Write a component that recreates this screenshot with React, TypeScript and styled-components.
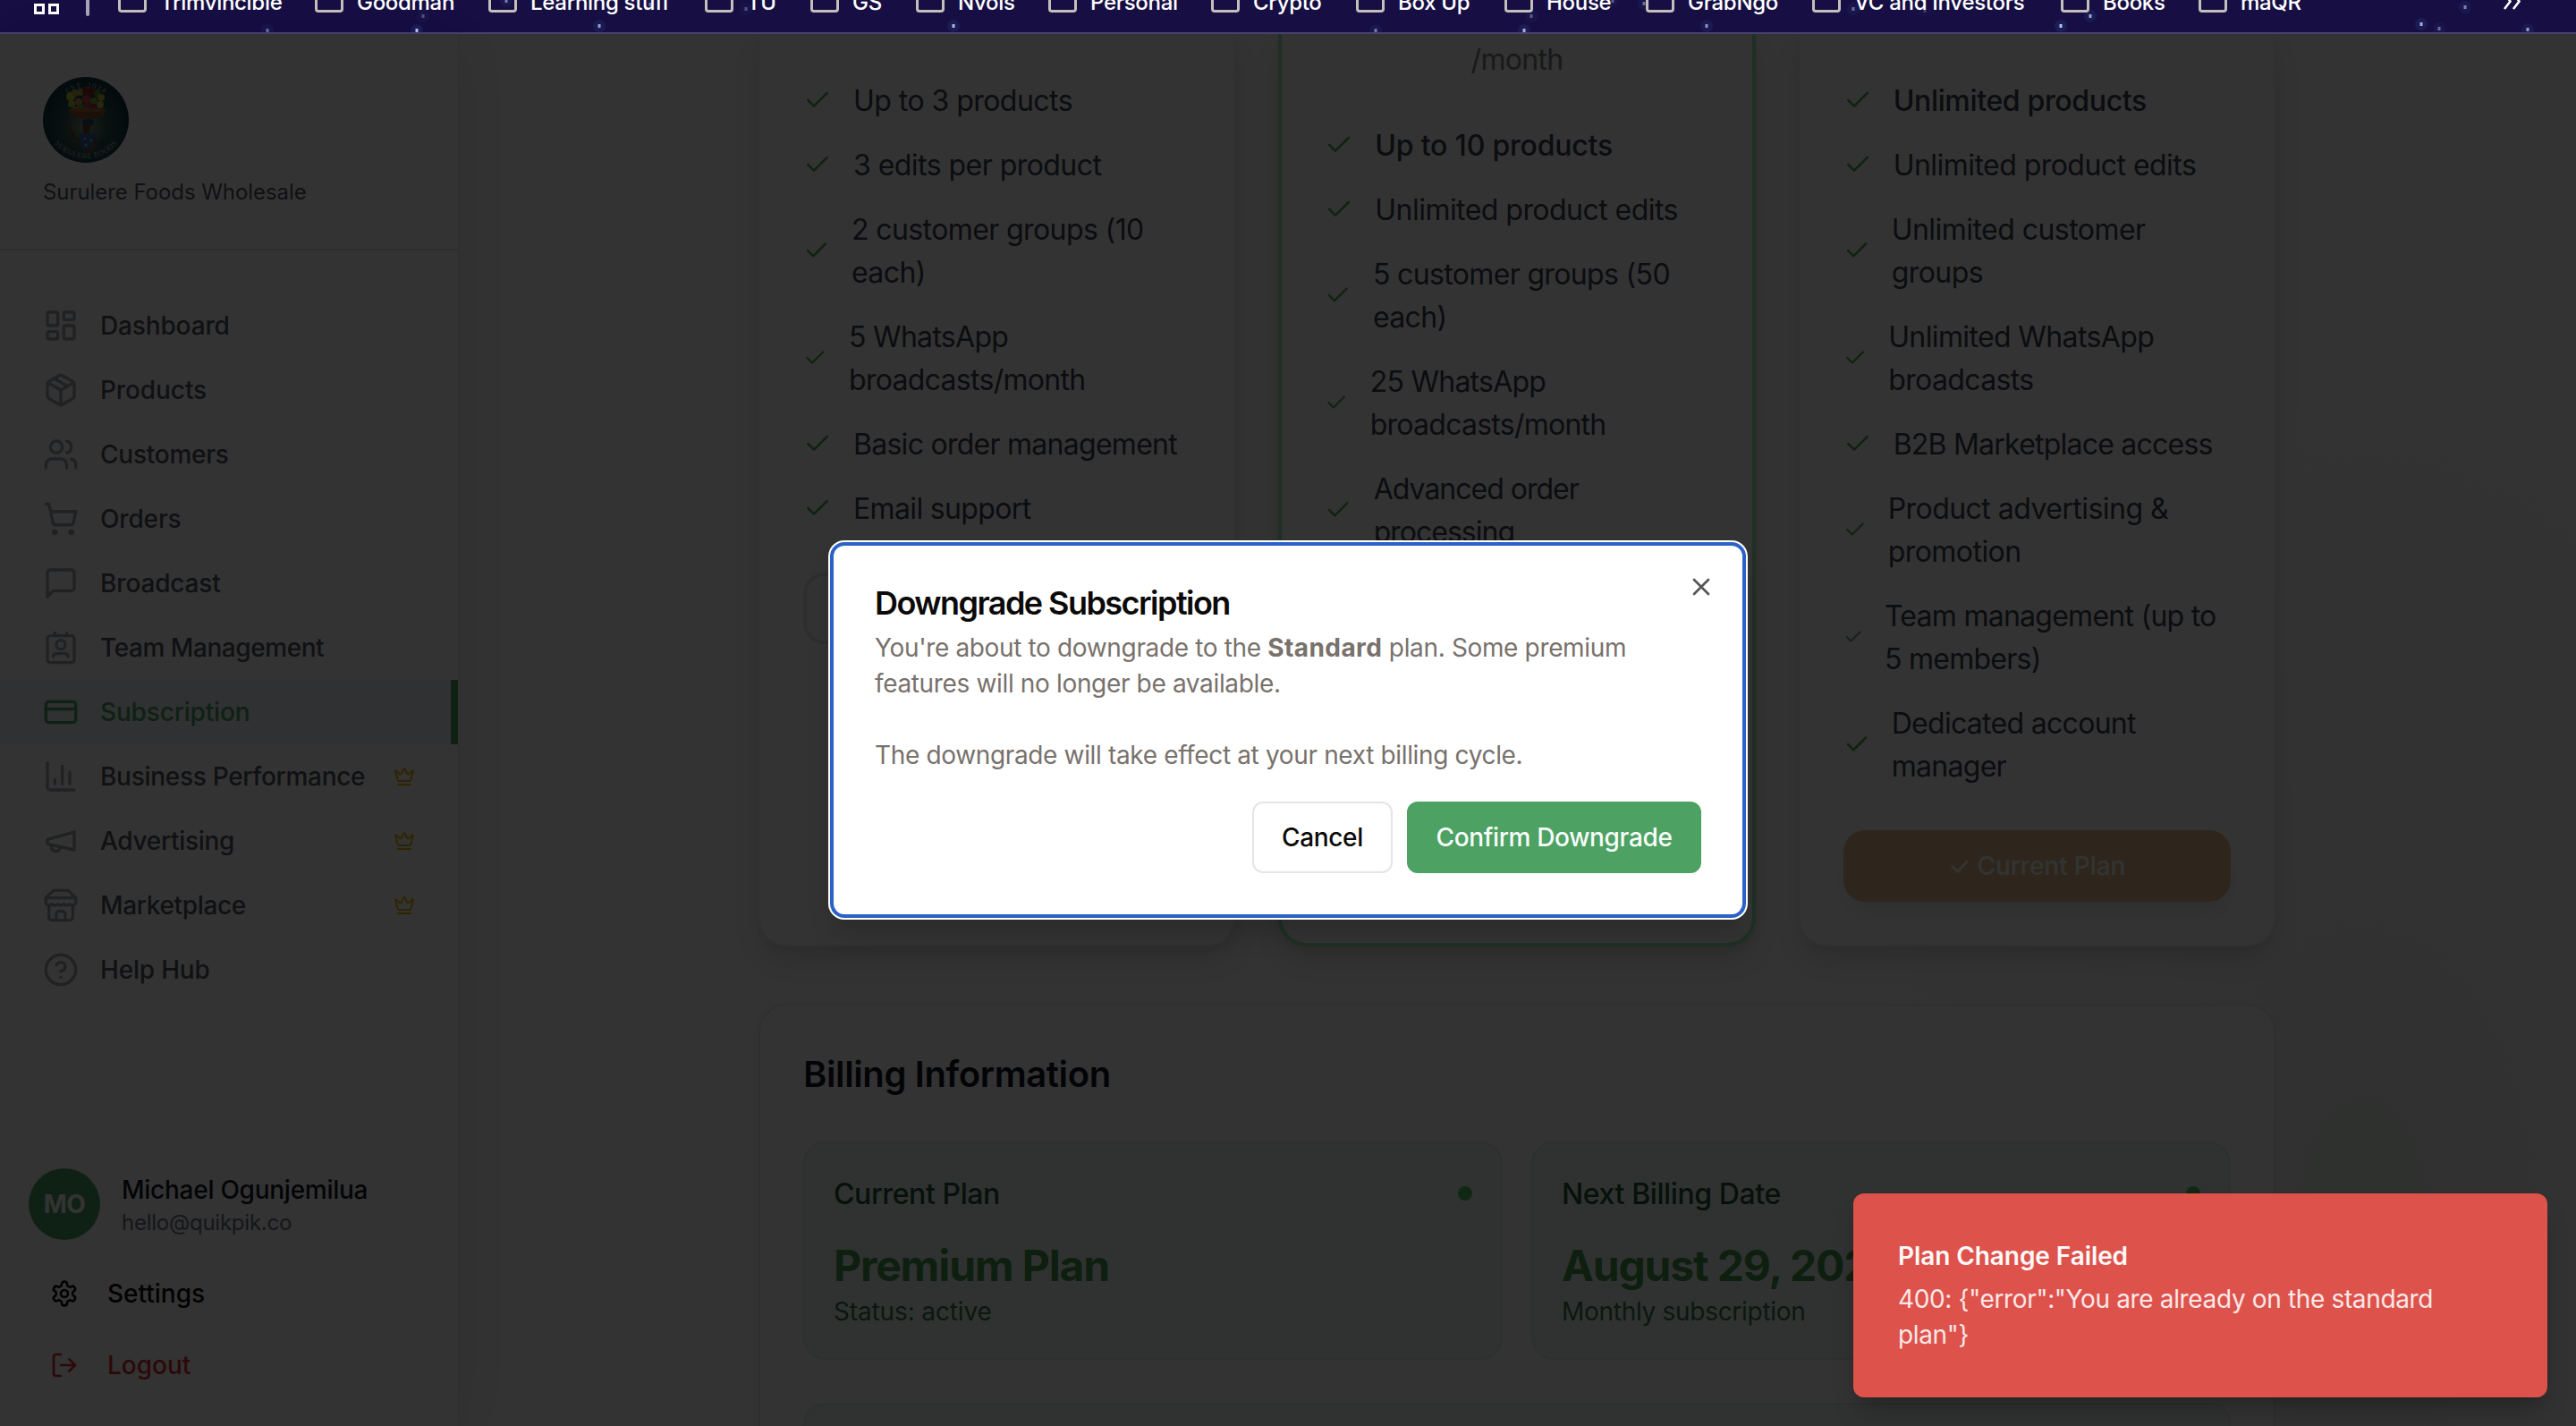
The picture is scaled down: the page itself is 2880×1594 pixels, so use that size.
import React from "react";
import styled, { createGlobalStyle, css } from "styled-components";

const Global = createGlobalStyle`
  *, *::before, *::after { box-sizing: border-box; }
  body { margin: 0; overflow: hidden; background: #ffffff; }
  button { font: inherit; margin: 0; padding: 0; background: none; border: 0; cursor: pointer; }
  ul { list-style: none; margin: 0; padding: 0; }
  h2, h3, p { margin: 0; }
`;

/* Drops a text one pixel inside its line without changing the space it takes. */
const lowered = css`
  display: block;
  padding-top: 1px;
  margin-bottom: -1px;
`;

/* ---------- icons ---------- */

type IconProps = { size: number; width?: number; stroke?: number; children: React.ReactNode };

const Svg = styled.svg`
  display: block;
  flex: none;
  fill: none;
  stroke: currentColor;
  stroke-linecap: round;
  stroke-linejoin: round;
`;

const Icon = ({ size, width = size, stroke = 2, children }: IconProps) => (
  <Svg width={width} height={size} viewBox="0 0 24 24" strokeWidth={stroke}>
    {children}
  </Svg>
);

const glyphs = {
  dashboard: (
    <>
      <rect width="7" height="9" x="3" y="3" rx="1" />
      <rect width="7" height="5" x="14" y="3" rx="1" />
      <rect width="7" height="9" x="14" y="12" rx="1" />
      <rect width="7" height="5" x="3" y="16" rx="1" />
    </>
  ),
  box: (
    <>
      <path d="m7.5 4.27 9 5.15" />
      <path d="M21 8a2 2 0 0 0-1-1.73l-7-4a2 2 0 0 0-2 0l-7 4A2 2 0 0 0 3 8v8a2 2 0 0 0 1 1.73l7 4a2 2 0 0 0 2 0l7-4A2 2 0 0 0 21 16Z" />
      <path d="m3.3 7 8.7 5 8.7-5" />
      <path d="M12 22V12" />
    </>
  ),
  users: (
    <>
      <path d="M16 21v-2a4 4 0 0 0-4-4H6a4 4 0 0 0-4 4v2" />
      <circle cx="9" cy="7" r="4" />
      <path d="M22 21v-2a4 4 0 0 0-3-3.87" />
      <path d="M16 3.13a4 4 0 0 1 0 7.75" />
    </>
  ),
  cart: (
    <>
      <circle cx="8" cy="21" r="1" />
      <circle cx="19" cy="21" r="1" />
      <path d="M2.05 2.05h2l2.66 12.42a2 2 0 0 0 2 1.58h9.78a2 2 0 0 0 1.95-1.57l1.65-7.43H5.12" />
    </>
  ),
  message: <path d="M21 15a2 2 0 0 1-2 2H7l-4 4V5a2 2 0 0 1 2-2h14a2 2 0 0 1 2 2z" />,
  contact: (
    <>
      <path d="M17 18a2 2 0 0 0-2-2H9a2 2 0 0 0-2 2" />
      <rect width="18" height="18" x="3" y="4" rx="2" />
      <circle cx="12" cy="10" r="3" />
      <path d="M8 2v2M16 2v2" />
    </>
  ),
  card: (
    <>
      <rect width="20" height="14" x="2" y="5" rx="2" />
      <path d="M2 10h20" />
    </>
  ),
  chart: (
    <>
      <path d="M3 3v16a2 2 0 0 0 2 2h16" />
      <path d="M18 17V9M13 17V5M8 17v-3" />
    </>
  ),
  megaphone: (
    <>
      <path d="m3 11 18-5v12L3 14v-3z" />
      <path d="M11.6 16.8a3 3 0 1 1-5.8-1.6" />
    </>
  ),
  store: (
    <>
      <path d="m2 7 4.41-4.41A2 2 0 0 1 7.83 2h8.34a2 2 0 0 1 1.42.59L22 7" />
      <path d="M4 12v8a2 2 0 0 0 2 2h12a2 2 0 0 0 2-2v-8" />
      <path d="M15 22v-4a2 2 0 0 0-2-2h-2a2 2 0 0 0-2 2v4" />
      <path d="M2 7h20" />
      <path d="M22 7v3a2 2 0 0 1-2 2a2.7 2.7 0 0 1-1.59-.63.7.7 0 0 0-.82 0A2.7 2.7 0 0 1 16 12a2.7 2.7 0 0 1-1.59-.63.7.7 0 0 0-.82 0A2.7 2.7 0 0 1 12 12a2.7 2.7 0 0 1-1.59-.63.7.7 0 0 0-.82 0A2.7 2.7 0 0 1 8 12a2.7 2.7 0 0 1-1.59-.63.7.7 0 0 0-.82 0A2.7 2.7 0 0 1 4 12a2 2 0 0 1-2-2V7" />
    </>
  ),
  help: (
    <>
      <circle cx="12" cy="12" r="10" />
      <path d="M9.09 9a3 3 0 0 1 5.83 1c0 2-3 3-3 3" />
      <path d="M12 17h.01" />
    </>
  ),
  crown: (
    <>
      <path d="M11.562 3.266a.5.5 0 0 1 .876 0L15.39 8.87a1 1 0 0 0 1.516.294L21.183 5.5a.5.5 0 0 1 .798.519l-2.834 10.246a1 1 0 0 1-.956.734H5.81a1 1 0 0 1-.957-.734L2.02 6.02a.5.5 0 0 1 .798-.519l4.276 3.664a1 1 0 0 0 1.516-.294z" />
      <path d="M5 21h14" />
    </>
  ),
  settings: (
    <>
      <path d="M12.22 2h-.44a2 2 0 0 0-2 2v.18a2 2 0 0 1-1 1.73l-.43.25a2 2 0 0 1-2 0l-.15-.08a2 2 0 0 0-2.73.73l-.22.38a2 2 0 0 0 .73 2.73l.15.1a2 2 0 0 1 1 1.72v.51a2 2 0 0 1-1 1.74l-.15.09a2 2 0 0 0-.73 2.73l.22.38a2 2 0 0 0 2.73.73l.15-.08a2 2 0 0 1 2 0l.43.25a2 2 0 0 1 1 1.73V20a2 2 0 0 0 2 2h.44a2 2 0 0 0 2-2v-.18a2 2 0 0 1 1-1.73l.43-.25a2 2 0 0 1 2 0l.15.08a2 2 0 0 0 2.73-.73l.22-.39a2 2 0 0 0-.73-2.73l-.15-.08a2 2 0 0 1-1-1.74v-.5a2 2 0 0 1 1-1.74l.15-.09a2 2 0 0 0 .73-2.73l-.22-.38a2 2 0 0 0-2.73-.73l-.15.08a2 2 0 0 1-2 0l-.43-.25a2 2 0 0 1-1-1.73V4a2 2 0 0 0-2-2z" />
      <circle cx="12" cy="12" r="3" />
    </>
  ),
  logout: (
    <>
      <path d="M9 21H5a2 2 0 0 1-2-2V5a2 2 0 0 1 2-2h4" />
      <path d="m16 17 5-5-5-5" />
      <path d="M21 12H9" />
    </>
  ),
  check: <path d="M20 6 9 17l-5-5" />,
  close: <path d="M18 6 6 18M6 6l12 12" />,
};

/* ---------- shell ---------- */

const Screen = styled.div`
  position: relative;
  width: 2880px;
  height: 1594px;
  overflow: hidden;
  display: flex;
  flex-direction: column;
  font-family: Inter, "Liberation Sans", sans-serif;
  font-size: 28px;
  line-height: 40px;
`;

const BookmarkBar = styled.header`
  position: relative;
  flex: none;
  height: 38px;
  overflow: hidden;
  background: #170f43;
  border-bottom: 2px solid #4a4170;
`;

const StarField = styled.svg`
  position: absolute;
  inset: 0;
  width: 2880px;
  height: 36px;
`;

const BookmarkRow = styled.div`
  position: relative;
  height: 44px;
  margin-top: -21px;
  padding-left: 38px;
  display: flex;
  align-items: center;
  color: #ffffff;
`;

const Separator = styled.div`
  width: 4px;
  height: 34px;
  margin: 0 32px 0 30px;
  border-radius: 2px;
  background: #a8a4b8;
`;

const Bookmark = styled.div<{ $width: number }>`
  flex: none;
  width: ${(p) => p.$width}px;
  display: flex;
  align-items: center;
  gap: 15px;
  font-size: 24px;
  font-weight: 500;
  line-height: 30px;
  letter-spacing: -0.3px;
  white-space: nowrap;
`;

const BookmarkLabel = styled.span`
  display: block;
  padding-top: 1.5px;
  margin-bottom: -1.5px;
`;

const Folder = styled.span`
  width: 32px;
  height: 26px;
  border: 3px solid #c3bfbb;
  border-radius: 4px;
`;

const MoreButton = styled.button`
  margin-left: 187px;
  color: #ffffff;
`;

const Workspace = styled.div`
  flex: 1;
  min-height: 0;
  display: grid;
  grid-template-columns: 512px 1fr;
  grid-template-rows: minmax(0, 1fr);
  background: #fcfcfc;
`;

/* ---------- sidebar ---------- */

const Sidebar = styled.aside`
  position: relative;
  z-index: 1;
  display: flex;
  flex-direction: column;
  background: #ffffff;
  box-shadow: 0 20px 50px rgba(0, 0, 0, 0.05), 8px 0 64px rgba(0, 0, 0, 0.03), 0 0 4px rgba(0, 0, 0, 0.06);
`;

const StoreHeader = styled.div`
  flex: none;
  height: 242px;
  padding: 48px;
  display: flex;
  flex-direction: column;
  align-items: flex-start;
  gap: 16px;
  border-bottom: 2px solid #e5e7eb;
`;

const StoreName = styled.div`
  ${lowered}
  font-size: 24px;
  line-height: 32px;
  letter-spacing: -0.06px;
  color: #4b5563;
`;

const Nav = styled.nav`
  flex: 1;
  padding-top: 48px;
`;

const NavItem = styled.a<{ $active?: boolean; $tracking: number }>`
  height: 72px;
  padding: 0 48px;
  display: flex;
  align-items: center;
  gap: 24px;
  color: #4f5561;
  font-weight: 500;
  letter-spacing: ${(p) => p.$tracking}px;
  white-space: nowrap;
  > svg:first-child { color: #9ca3af; }
  ${(p) =>
    p.$active &&
    css`
      background: #f0f4f8;
      color: #4ba564;
      border-right: 8px solid #4ba564;
      > svg:first-child { color: #4ba564; }
    `}
`;

const PremiumMark = styled.span`
  margin-left: auto;
  color: #eab308;
`;

const Account = styled.div`
  flex: none;
  padding: 0 32px 24px;
  display: flex;
  flex-direction: column;
`;

const Profile = styled.div`
  height: 80px;
  margin-bottom: 24px;
  display: flex;
  align-items: center;
  gap: 24px;
`;

const Avatar = styled.div`
  width: 80px;
  height: 80px;
  border-radius: 50%;
  display: flex;
  align-items: center;
  justify-content: center;
  background: #4ba564;
  color: #ffffff;
  font-weight: 700;
  letter-spacing: -0.6px;
`;

const ProfileName = styled.div`
  font-weight: 500;
  letter-spacing: -0.26px;
  color: #111827;
`;

const ProfileEmail = styled.div`
  ${lowered}
  font-size: 24px;
  line-height: 32px;
  letter-spacing: -0.24px;
  color: #6b7280;
`;

const AccountAction = styled.button<{ $danger?: boolean }>`
  height: 72px;
  margin-bottom: 8px;
  padding-left: 24px;
  display: flex;
  align-items: center;
  gap: 32px;
  font-weight: 500;
  color: ${(p) => (p.$danger ? "#dc2f2a" : "#0a0a0a")};
`;

/* ---------- plans ---------- */

const Main = styled.main`
  min-width: 0;
  padding: 0 336px;
  display: flex;
  flex-direction: column;
  gap: 64px;
  background:
    radial-gradient(ellipse 560px 900px at 2130px 1300px, rgba(226, 238, 226, 0.7), rgba(240, 246, 240, 0.4) 55%, rgba(252, 252, 252, 0)),
    #fcfcfc;
`;

const PlanGrid = styled.section`
  flex: none;
  height: 1020px;
  display: grid;
  grid-template-columns: repeat(3, 1fr);
  gap: 48px;
`;

const PlanCard = styled.article<{ $featured?: boolean }>`
  display: flex;
  flex-direction: column;
  padding: ${(p) => (p.$featured ? "0 48px" : "50px 48px 48px")};
  border: solid ${(p) => (p.$featured ? "#9be8b0" : "#f1f3f5")};
  border-width: ${(p) => (p.$featured ? "0 4px 4px" : "0 2px 2px")};
  border-radius: 0 0 32px 32px;
  background: #ffffff;
  box-shadow: 0 16px 32px -4px rgba(0, 0, 0, 0.13), 0 4px 10px rgba(0, 0, 0, 0.05);
`;

const Period = styled.div`
  margin: 5px 0 47px;
  text-align: center;
  font-size: 32px;
  line-height: 48px;
  letter-spacing: -0.7px;
  color: #7b7f87;
`;

const FeatureList = styled.ul`
  display: flex;
  flex-direction: column;
  gap: 24px;
  margin-bottom: 48px;
`;

const Feature = styled.li<{ $strong?: boolean; $tracking?: number }>`
  display: flex;
  align-items: center;
  gap: 24px;
  font-size: 32px;
  line-height: 48px;
  font-weight: ${(p) => (p.$strong ? 500 : 400)};
  letter-spacing: ${(p) => p.$tracking ?? -0.54}px;
  color: #374151;
  white-space: pre;
  svg { color: #4cae50; }
`;

const FeatureText = styled.span`
  ${lowered}
`;

const PlanButton = styled.button`
  height: 80px;
  flex: none;
  border: 4px solid #e5e7eb;
  border-radius: 24px;
`;

const CurrentPlanButton = styled.button`
  height: 80px;
  flex: none;
  border-radius: 24px;
  background: #e3be8a;
  color: #ffffff;
  font-weight: 500;
  letter-spacing: -0.1px;
  box-shadow: 0 16px 26px -8px rgba(0, 0, 0, 0.12);
`;

/* ---------- billing ---------- */

const Billing = styled.section`
  height: 700px;
  flex: none;
  padding: 48px;
  border: 2px solid #eaecef;
  border-radius: 32px;
  background: #ffffff;
  box-shadow: 0 2px 6px rgba(0, 0, 0, 0.05);
`;

const BillingTitle = styled.h2`
  padding-top: 1px;
  margin-bottom: 47px;
  font-size: 40px;
  line-height: 56px;
  font-weight: 600;
  letter-spacing: -0.38px;
  color: #111827;
`;

const BillingGrid = styled.div`
  display: grid;
  grid-template-columns: 1fr 1fr;
  gap: 48px 32px;
`;

const Panel = styled.div<{ $wide?: boolean }>`
  height: 244px;
  padding: 32px;
  border: 2px solid #e0f0e9;
  border-radius: 24px;
  background: #f0f8f4;
  ${(p) => p.$wide && "grid-column: 1 / -1;"}
`;

const PanelHead = styled.div`
  height: 48px;
  margin-bottom: 24px;
  display: flex;
  align-items: center;
  justify-content: space-between;
`;

const PanelLabel = styled.h3`
  padding-top: 1px;
  margin-bottom: -1px;
  font-size: 32px;
  line-height: 48px;
  font-weight: 500;
  letter-spacing: -0.4px;
  color: #27553a;
`;

const Dot = styled.span`
  width: 16px;
  height: 16px;
  border-radius: 50%;
  background: #4cc15f;
`;

const PanelValue = styled.p`
  padding-top: 1px;
  margin-bottom: -1px;
  font-size: 48px;
  line-height: 64px;
  font-weight: 700;
  letter-spacing: -1.15px;
  color: #459b4f;
`;

const PanelNote = styled.p<{ $tracking: number }>`
  letter-spacing: ${(p) => p.$tracking}px;
  color: #35794c;
`;

/* ---------- layers above the page ---------- */

const Scrim = styled.div`
  position: absolute;
  inset: 38px 0 0;
  z-index: 2;
  background: rgba(0, 0, 0, 0.8);
`;

const Dialog = styled.div`
  position: absolute;
  left: 928px;
  top: 606px;
  z-index: 3;
  width: 1024px;
  height: 420px;
  padding: 50px;
  display: flex;
  flex-direction: column;
  border-radius: 16px;
  background: #ffffff;
  box-shadow: inset 0 0 0 4px #2a62c8, 0 0 0 2px #ffffff, 0 20px 30px -6px rgba(0, 0, 0, 0.18);
`;

const DialogClose = styled.button`
  position: absolute;
  top: 34px;
  right: 34px;
  color: #555555;
`;

const DialogTitle = styled.h2`
  margin-bottom: 12px;
  font-size: 36px;
  line-height: 36px;
  font-weight: 600;
  letter-spacing: -1.55px;
  color: #0c0a09;
`;

const DialogText = styled.p`
  letter-spacing: -0.35px;
  color: #78716c;
  strong { letter-spacing: 0.42px; }
`;

const DialogActions = styled.div`
  margin-top: auto;
  display: flex;
  justify-content: flex-end;
  gap: 16px;
`;

const DialogButton = styled.button<{ $primary?: boolean; $width: number }>`
  width: ${(p) => p.$width}px;
  height: 80px;
  border-radius: 12px;
  border: 2px solid ${(p) => (p.$primary ? "#4ca163" : "#e6e5e4")};
  background: ${(p) => (p.$primary ? "#4ca163" : "#ffffff")};
  color: ${(p) => (p.$primary ? "#f8fdf9" : "#0c0a09")};
  font-weight: 500;
  letter-spacing: -0.35px;
`;

const Toast = styled.div`
  position: absolute;
  right: 32px;
  bottom: 32px;
  z-index: 4;
  width: 776px;
  height: 228px;
  padding: 50px;
  display: flex;
  flex-direction: column;
  gap: 8px;
  border-radius: 12px;
  background: #de524c;
  color: #fdf9f9;
  box-shadow: 0 20px 30px -6px rgba(0, 0, 0, 0.2), 0 8px 12px -8px rgba(0, 0, 0, 0.2);
`;

const ToastTitle = styled.div`
  font-weight: 600;
  letter-spacing: -0.08px;
`;

const ToastText = styled.div`
  letter-spacing: -0.35px;
  opacity: 0.9;
  white-space: pre;
`;

/* ---------- data ---------- */

const bookmarks: [string, number][] = [
  ["Trimvincible", 220],
  ["Goodman", 194],
  ["Learning stuff", 242],
  ["TU", 118],
  ["GS", 118],
  ["Nvols", 148],
  ["Personal", 182],
  ["Crypto", 162],
  ["Box Up", 166],
  ["House", 158],
  ["GrabNgo", 186],
  ["VC and Investors", 278],
  ["Books", 154],
  ["maQR", 154],
];

const stars: [number, number, number][] = [
  [299, 34, 0.5], [473, 18, 0.35], [466, 34, 0.95], [670, 29, 0.75], [834, 10, 0.35], [566, 1, 0.6],
  [727, 5, 0.5], [1066, 29, 0.9], [1538, 34, 0.55], [1704, 34, 0.85], [1712, 18, 0.4], [1803, 1, 0.4],
  [1838, 4, 0.5], [1908, 29, 0.7], [2072, 10, 0.5], [2152, 12, 0.25], [2304, 29, 0.95], [2337, 18, 0.8],
  [2756, 8, 0.6], [2707, 27, 0.85], [2727, 32, 0.5], [2826, 33, 0.75],
];

type NavEntry = { label: string; icon: keyof typeof glyphs; tracking: number; active?: boolean; premium?: boolean };

const navEntries: NavEntry[] = [
  { label: "Dashboard", icon: "dashboard", tracking: -0.15 },
  { label: "Products", icon: "box", tracking: -0.1 },
  { label: "Customers", icon: "users", tracking: -0.25 },
  { label: "Orders", icon: "cart", tracking: -0.15 },
  { label: "Broadcast", icon: "message", tracking: -0.15 },
  { label: "Team Management", icon: "contact", tracking: -0.44 },
  { label: "Subscription", icon: "card", tracking: -0.17, active: true },
  { label: "Business Performance", icon: "chart", tracking: -0.29, premium: true },
  { label: "Advertising", icon: "megaphone", tracking: -0.3, premium: true },
  { label: "Marketplace", icon: "store", tracking: -0.33, premium: true },
  { label: "Help Hub", icon: "help", tracking: -0.2 },
];

type FeatureEntry = { text: string; check?: number; strong?: boolean; tracking?: number };

const freeFeatures: FeatureEntry[] = [
  { text: "Up to 3 products" },
  { text: "3 edits per product" },
  { text: "2 customer groups (10\neach)", check: 30, tracking: -0.6 },
  { text: "5 WhatsApp\nbroadcasts/month", check: 27, tracking: -0.7 },
  { text: "Basic order management", tracking: -0.73 },
  { text: "Email support", tracking: -0.65 },
];

const standardFeatures: FeatureEntry[] = [
  { text: "Up to 10 products", strong: true, tracking: -0.2 },
  { text: "Unlimited product edits" },
  { text: "5 customer groups (50\neach)", check: 29.6, tracking: -0.65 },
  { text: "25 WhatsApp\nbroadcasts/month", check: 26.4, tracking: -0.75 },
  { text: "Advanced order\nprocessing", check: 30.4, tracking: -1 },
];

const premiumFeatures: FeatureEntry[] = [
  { text: "Unlimited products", strong: true, tracking: -0.34 },
  { text: "Unlimited product edits" },
  { text: "Unlimited customer\ngroups", check: 30 },
  { text: "Unlimited WhatsApp\nbroadcasts", check: 26.5, tracking: -0.62 },
  { text: "B2B Marketplace access", tracking: -0.77 },
  { text: "Product advertising &\npromotion", check: 26 },
  { text: "Team management (up to\n5 members)", check: 22.3, tracking: -0.74 },
  { text: "Dedicated account\nmanager", check: 30, tracking: -0.7 },
];

/* ---------- pieces ---------- */

const Features = ({ items }: { items: FeatureEntry[] }) => (
  <FeatureList>
    {items.map((f) => (
      <Feature key={f.text} $strong={f.strong} $tracking={f.tracking}>
        <Icon size={32} width={f.check ?? 32}>{glyphs.check}</Icon>
        <FeatureText>{f.text}</FeatureText>
      </Feature>
    ))}
  </FeatureList>
);

const fruits: [number, number, number, string][] = [
  [31, 22, 5, "#c9c93a"], [36, 18, 4, "#b9a43a"], [42, 17, 4, "#9fb23d"], [49, 16, 5, "#a52b2b"], [56, 17, 4, "#8c2a30"],
  [61, 19, 4, "#4f8a35"], [65, 23, 4, "#c9b93a"], [32, 30, 4, "#a9bd3c"], [40, 28, 4, "#d98a3a"], [49, 25, 5, "#c04a55"],
  [57, 27, 4, "#7fa43a"], [64, 31, 4, "#b8c04a"], [42, 34, 4, "#6f9d3a"], [50, 33, 4, "#b8434a"], [57, 34, 4, "#9b3550"],
  [36, 36, 3, "#c9a03a"],
];

const StoreLogo = () => (
  <svg width="96" height="96" viewBox="0 0 96 96">
    <defs>
      <radialGradient id="logoGlow" cx="50%" cy="58%" r="50%">
        <stop offset="0" stopColor="#8b9a80" />
        <stop offset="0.5" stopColor="#2c5352" />
        <stop offset="1" stopColor="#10393f" />
      </radialGradient>
      <path id="logoTop" d="M12 48a36 36 0 0 1 72 0" />
      <path id="logoBottom" d="M3 46a45 45 0 0 0 90 0" />
    </defs>
    <circle cx="48" cy="48" r="48" fill="url(#logoGlow)" />
    {fruits.map(([x, y, r, fill]) => (
      <circle key={`${x}-${y}`} cx={x} cy={y} r={r} fill={fill} />
    ))}
    <path d="M29 37h41c0 6-6 9-13 9H43c-8 0-13-3-14-9z" fill="#8a4f2a" />
    <ellipse cx="49.500" cy="37" rx="21" ry="2" fill="#a8683a" />
    <path d="M44 50c0-4 12-5 13 0 1 4-3 6-5 5-3 1-8-1-8-5z" fill="#24507f" />
    <path d="M45 53c1-2 8-1 8 1 0 5-1 6-2 9h-5c-1-3-2-6-1-10z" fill="#6b3c22" />
    <path d="m42 72-9-6-3-8" fill="none" stroke="#6b3c22" strokeWidth="3" strokeLinecap="round" />
    <path d="m29 57 6-4" stroke="#8a4a3a" strokeWidth="2" strokeLinecap="round" />
    <path d="M41 65c4-3 14-3 18 1 2 5 1 9-2 13-4 3-10 3-14 0-1-5-3-9-2-14z" fill="#2a67a5" />
    <path d="M58 70c3 5 1 9-7 14l-4-1" fill="none" stroke="#7a4428" strokeWidth="3" strokeLinecap="round" />
    <circle cx="47" cy="69" r="1.600" fill="#d99a3a" />
    <circle cx="54" cy="71" r="1.600" fill="#d99a3a" />
    <circle cx="48" cy="76" r="1.600" fill="#d99a3a" />
    <text fontFamily="Liberation Serif, serif" fontSize="8.500" letterSpacing="1" fill="#a9b8ac">
      <textPath href="#logoTop" startOffset="50%" textAnchor="middle">EST. 2024</textPath>
    </text>
    <text fontFamily="Liberation Serif, serif" fontSize="8.500" letterSpacing="0.500" fill="#a9b8ac">
      <textPath href="#logoBottom" startOffset="50%" textAnchor="middle">SURULERE FOODS</textPath>
    </text>
  </svg>
);

export default function App() {
  return (
    <Screen>
      <Global />
      <BookmarkBar>
        <StarField viewBox="0 0 2880 36">
          {stars.map(([x, y, o]) => (
            <g key={`${x}-${y}`} opacity={o}>
              <circle cx={x} cy={y} r="7" fill="#2c4a9a" opacity="0.25" />
              <rect x={x - 1.5} y={y - 2} width="3" height="4" fill="#c9c8f2" />
            </g>
          ))}
        </StarField>
        <BookmarkRow>
          <svg width="28" height="30" viewBox="0 0 28 30" fill="none" stroke="#ffffff" strokeWidth="3">
            <rect x="1.500" y="3.500" width="9" height="9" />
            <rect x="17.500" y="3.500" width="9" height="9" />
            <rect x="1.500" y="19.500" width="9" height="9" />
            <rect x="17.500" y="19.500" width="9" height="9" />
          </svg>
          <Separator />
          {bookmarks.map(([label, width]) => (
            <Bookmark key={label} $width={width}>
              <Folder />
              <BookmarkLabel>{label}</BookmarkLabel>
            </Bookmark>
          ))}
          <MoreButton>
            <svg width="20" height="20" viewBox="0 0 20 20" fill="none" stroke="currentColor" strokeWidth="2.600">
              <path d="m1 2 6.500 8.500-6.500 8.500M11 2l6.500 8.500-6.500 8.500" />
            </svg>
          </MoreButton>
        </BookmarkRow>
      </BookmarkBar>

      <Workspace>
        <Sidebar>
          <StoreHeader>
            <StoreLogo />
            <StoreName>Surulere Foods Wholesale</StoreName>
          </StoreHeader>
          <Nav>
            {navEntries.map((n) => (
              <NavItem key={n.label} $active={n.active} $tracking={n.tracking}>
                <Icon size={40}>{glyphs[n.icon]}</Icon>
                {n.label}
                {n.premium && (
                  <PremiumMark>
                    <Icon size={24}>{glyphs.crown}</Icon>
                  </PremiumMark>
                )}
              </NavItem>
            ))}
          </Nav>
          <Account>
            <Profile>
              <Avatar>MO</Avatar>
              <div>
                <ProfileName>Michael Ogunjemilua</ProfileName>
                <ProfileEmail>hello@quikpik.co</ProfileEmail>
              </div>
            </Profile>
            <AccountAction>
              <Icon size={32}>{glyphs.settings}</Icon>
              Settings
            </AccountAction>
            <AccountAction $danger>
              <Icon size={32}>{glyphs.logout}</Icon>
              Logout
            </AccountAction>
          </Account>
        </Sidebar>

        <Main>
          <PlanGrid>
            <PlanCard>
              <Features items={freeFeatures} />
              <PlanButton />
            </PlanCard>
            <PlanCard $featured>
              <Period>/month</Period>
              <Features items={standardFeatures} />
            </PlanCard>
            <PlanCard>
              <Features items={premiumFeatures} />
              <CurrentPlanButton>✓ Current Plan</CurrentPlanButton>
            </PlanCard>
          </PlanGrid>

          <Billing>
            <BillingTitle>Billing Information</BillingTitle>
            <BillingGrid>
              <Panel>
                <PanelHead>
                  <PanelLabel>Current Plan</PanelLabel>
                  <Dot />
                </PanelHead>
                <PanelValue>Premium Plan</PanelValue>
                <PanelNote $tracking={-0.14}>Status: active</PanelNote>
              </Panel>
              <Panel>
                <PanelHead>
                  <PanelLabel>Next Billing Date</PanelLabel>
                  <Dot />
                </PanelHead>
                <PanelValue>August 29, 2025</PanelValue>
                <PanelNote $tracking={-0.29}>Monthly subscription</PanelNote>
              </Panel>
              <Panel $wide />
            </BillingGrid>
          </Billing>
        </Main>
      </Workspace>

      <Scrim />

      <Dialog role="dialog">
        <DialogClose aria-label="Close">
          <Icon size={32}>{glyphs.close}</Icon>
        </DialogClose>
        <DialogTitle>Downgrade Subscription</DialogTitle>
        <DialogText>
          You're about to downgrade to the <strong>Standard</strong> plan. Some premium
          <br />
          features will no longer be available.
          <br />
          <br />
          The downgrade will take effect at your next billing cycle.
        </DialogText>
        <DialogActions>
          <DialogButton $width={157}>Cancel</DialogButton>
          <DialogButton $width={329} $primary>
            Confirm Downgrade
          </DialogButton>
        </DialogActions>
      </Dialog>

      <Toast role="alert">
        <ToastTitle>Plan Change Failed</ToastTitle>
        <ToastText>{'400: {"error":"You are already on the standard\nplan"}'}</ToastText>
      </Toast>
    </Screen>
  );
}
